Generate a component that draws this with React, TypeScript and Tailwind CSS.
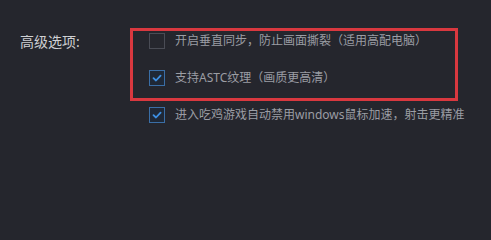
import React from 'react';

const font = { fontFamily: '"Noto Sans", "Noto Sans CJK SC", sans-serif' };

function Check({ checked }: { checked: boolean }) {
  if (!checked) {
    return <span className="block h-[16px] w-[16px] shrink-0 border border-[#4a4c55] bg-[#26272e]" />;
  }
  return (
    <span className="flex h-[16px] w-[16px] shrink-0 items-center justify-center border border-[#3a6ea6] bg-[#1f2836]">
      <svg width="10" height="10" viewBox="0 0 10 10" fill="none">
        <path d="M1.5 5.2 L4 7.5 L8.6 2.6" stroke="#3d8fe2" strokeWidth="1.8" strokeLinecap="round" strokeLinejoin="round" />
      </svg>
    </span>
  );
}

function Option({ checked, label }: { checked: boolean; label: string }) {
  return (
    <div className="flex h-[16px] items-center gap-[10px]">
      <Check checked={checked} />
      <span className="whitespace-nowrap text-[12px] leading-[16px] text-[#9b9da4]">{label}</span>
    </div>
  );
}

export default function App() {
  return (
    <div className="min-h-screen w-full overflow-hidden bg-[#25262d]" style={font}>
      <div className="flex h-[203px] pt-[28px]">
        <div className="w-[130px] shrink-0 pl-[20px] pt-[4px] text-[14px] leading-[20px] text-[#cfd0d3]">
          高级选项:
        </div>
        <div className="flex flex-col">
          <div className="flex w-[328px] flex-col gap-[21px] border-[3px] border-[#d9383f] pb-[12px] pl-[16px] pt-[2px]">
            <Option checked={false} label="开启垂直同步，防止画面撕裂（适用高配电脑）" />
            <Option checked label="支持ASTC纹理（画质更高清）" />
          </div>
          <div className="mt-[6px] pl-[19px]">
            <Option checked label="进入吃鸡游戏自动禁用windows鼠标加速，射击更精准" />
          </div>
        </div>
      </div>
    </div>
  );
}
